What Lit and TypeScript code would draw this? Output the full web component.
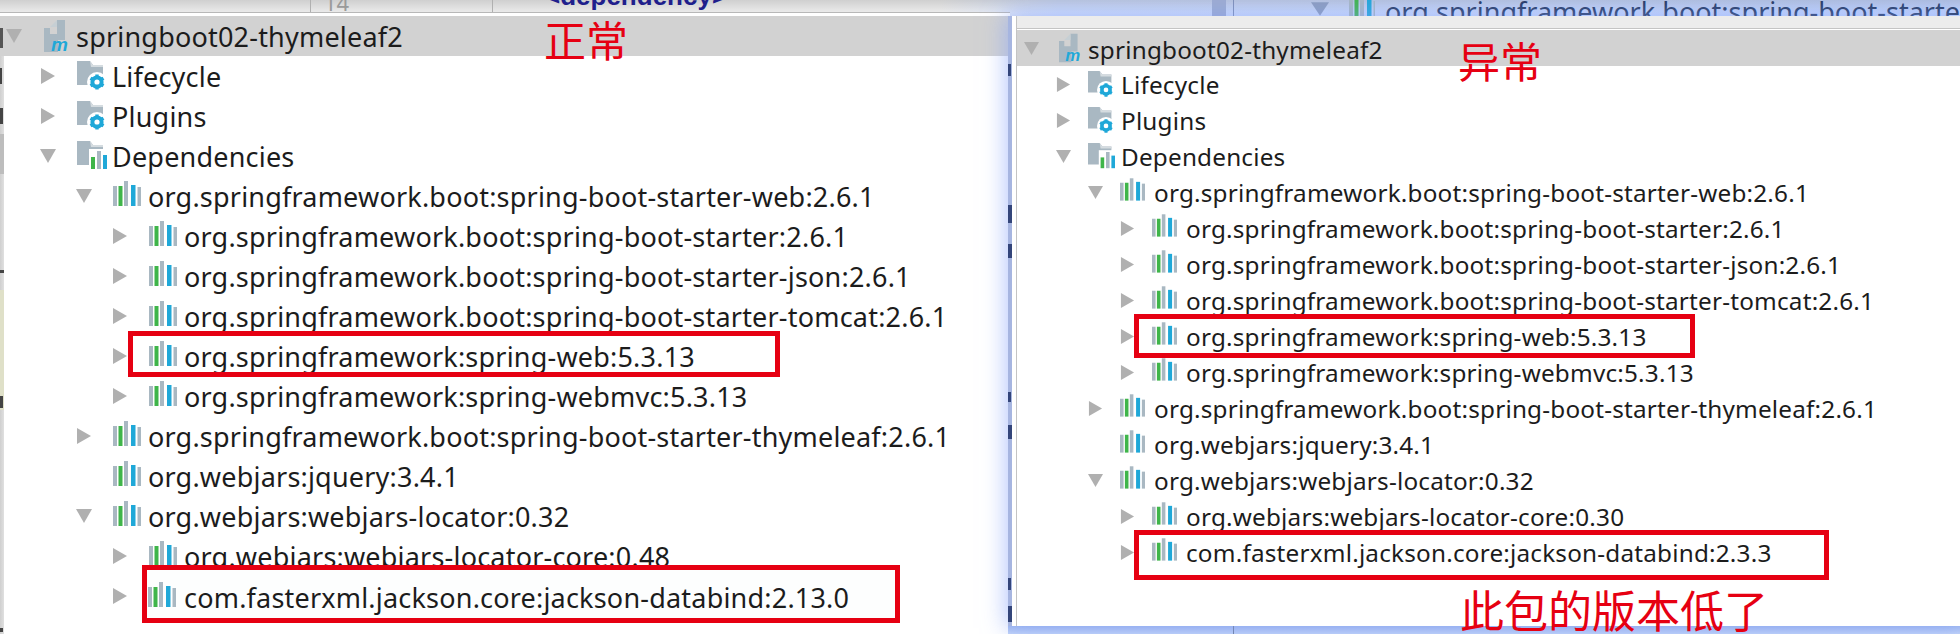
import { LitElement, html, css, svg } from "lit";
import { customElement } from "lit/decorators.js";

type Row = { t: string; l: number; a?: "r" | "d"; i: "dep" | "gear" | "bars"; };

const row = (t: string, l: number, i: Row["i"], a?: Row["a"]): Row => ({ t, l, i, a });

const rows = (core: string, jackson: string): Row[] => [
  row("Lifecycle", 0, "gear", "r"),
  row("Plugins", 0, "gear", "r"),
  row("Dependencies", 0, "bars", "d"),
  row("org.springframework.boot:spring-boot-starter-web:2.6.1", 1, "dep", "d"),
  row("org.springframework.boot:spring-boot-starter:2.6.1", 2, "dep", "r"),
  row("org.springframework.boot:spring-boot-starter-json:2.6.1", 2, "dep", "r"),
  row("org.springframework.boot:spring-boot-starter-tomcat:2.6.1", 2, "dep", "r"),
  row("org.springframework:spring-web:5.3.13", 2, "dep", "r"),
  row("org.springframework:spring-webmvc:5.3.13", 2, "dep", "r"),
  row("org.springframework.boot:spring-boot-starter-thymeleaf:2.6.1", 1, "dep", "r"),
  row("org.webjars:jquery:3.4.1", 1, "dep"),
  row("org.webjars:webjars-locator:0.32", 1, "dep", "d"),
  row(core, 2, "dep", "r"),
  row(jackson, 2, "dep", "r"),
];

const arrow = (a?: "r" | "d") =>
  a === "r"
    ? html`<svg class="arrow" viewBox="0 0 16 16"><path d="M1 0 L15 8 L1 16Z" fill="#b0b0b0"/></svg>`
    : a === "d"
    ? html`<svg class="arrow" viewBox="0 0 16 16"><path d="M0 1 L16 1 L8 15Z" fill="#b0b0b0"/></svg>`
    : html`<span class="arrow"></span>`;

const depIcon = html`<svg class="dep" viewBox="0 0 28 26">
  <rect x="0" y="6" width="4" height="20" fill="#a9b8c2"/>
  <rect x="5.5" y="6" width="4" height="20" fill="#3fb54a"/>
  <rect x="11" y="1" width="4" height="25" fill="#a9b8c2"/>
  <rect x="18" y="5" width="4.5" height="21" fill="#1fa8d8"/>
  <rect x="24.5" y="7" width="3.5" height="19" fill="#a9b8c2"/>
</svg>`;

const folder = svg`<path d="M0 0 H13 L16 4 H26 V24 H0Z" fill="#a9b8c2"/><path d="M13 0 L16 4 H26 V6 H14Z" fill="#d5dce0"/>`;

const gearIcon = html`<svg class="fold" viewBox="0 0 30 30">
  ${folder}
  <circle cx="20" cy="21" r="10" fill="#fff"/>
  <circle cx="20" cy="21" r="4.6" fill="none" stroke="#1fa8d8" stroke-width="4"/>
  <path d="M20 13.5 V16 M20 26 V28.5 M13.5 17.2 L16 18.7 M24 23.3 L26.5 24.8 M13.5 24.8 L16 23.3 M24 18.7 L26.5 17.2" stroke="#1fa8d8" stroke-width="3.4"/>
</svg>`;

const barsIcon = html`<svg class="fold" viewBox="0 0 30 30">
  ${folder}
  <rect x="12" y="8" width="18" height="20" fill="#fff"/>
  <rect x="14" y="16" width="4" height="12" fill="#3fb54a"/>
  <rect x="20" y="10" width="4" height="18" fill="#a9b8c2"/>
  <rect x="26" y="14" width="4" height="14" fill="#1fa8d8"/>
</svg>`;

const mIcon = html`<svg class="mod" viewBox="0 0 26 32">
  <path d="M0 8 H6 V14 H13 V0 H21 V20 H14 V32 H0Z" fill="#a9b8c2"/>
  <path d="M6 7 L13 0 V7Z" fill="#c6cfd4"/>
  <text x="7" y="31" class="m">m</text>
</svg>`;

const icon = (i: Row["i"]) => (i === "dep" ? depIcon : i === "gear" ? gearIcon : barsIcon);

const tree = (title: string, data: Row[]) => html`
  <div class="head">${arrow("d")}${mIcon}<span class="txt">${title}</span></div>
  ${data.map(
    (r) => html`<div class="row lv${r.l}">${arrow(r.a)}${icon(r.i)}<span class="txt">${r.t}</span></div>`
  )}
`;

// Slivers of the editor text that peek out beside each window: [top, height, width]
const leftBits = [[68, 16, 2], [108, 16, 3], [270, 3, 4], [396, 12, 3], [628, 4, 3]];
const rightBits = [[64, 12, 3], [205, 18, 4], [244, 14, 4], [392, 10, 3], [425, 14, 4], [578, 12, 3], [606, 16, 4]];

@customElement("app-root")
export class AppRoot extends LitElement {
  static styles = css`
    :host {
      display: block;
      width: 1960px;
      height: 634px;
      overflow: hidden;
      position: relative;
      background: #fff;
      font-family: "Noto Sans", "Noto Sans CJK SC", sans-serif;
      color: #1c1c1c;
    }
    .behind {
      position: absolute;
      left: 0;
      top: 0;
      right: 0;
      height: 16px;
      overflow: hidden;
      background: linear-gradient(180deg, rgba(0, 0, 0, 0.12), rgba(0, 0, 0, 0) 80%),
        linear-gradient(90deg, #ececec 0, #ececec 48%, #d4e0fa 54%, #c6d7fc 100%);
    }
    .gutter {
      position: absolute;
      top: 0;
      height: 12px;
      border-left: 1px solid #b0b0b0;
    }
    .frag {
      position: absolute;
      white-space: nowrap;
      line-height: 1;
    }
    .ln { left: 324px; top: -9px; font-size: 22px; color: #9a9a9a; }
    .tagtxt { left: 545px; top: -17px; font-size: 26px; font-weight: 700; color: #1f1f8c; font-family: "Liberation Sans", sans-serif; }
    .peek { left: 1385px; top: 0; font-size: 27px; color: #24375f; line-height: 24px; }
    .peekicon { position: absolute; left: 1349px; top: 0; width: 26px; height: 16px; overflow: hidden; }
    .peekarrow { position: absolute; left: 1311px; top: 2px; width: 18px; height: 14px; }
    .rule { position: absolute; left: 1233px; top: 0; height: 16px; width: 1px; background: #7f8fb5; }
    .thumb { position: absolute; left: 1212px; top: 0; height: 16px; width: 14px; background: #9eaccf; }

    .strip {
      position: absolute;
      left: 0;
      top: 56px;
      bottom: 0;
      width: 4px;
      background: linear-gradient(90deg, #cfcfcf, #e0e0e0);
      overflow: hidden;
    }
    .shade { position: absolute; left: 0; top: 78px; width: 4px; height: 40px; background: #bdbdbd; }
    .olive { position: absolute; left: 0; top: 234px; width: 4px; height: 120px; background: #dfe0c8; }
    .bit { position: absolute; left: 0; background: #444; }
    .headbit { position: absolute; left: 0; top: 28px; width: 3px; height: 20px; background: #555; }

    .win {
      position: absolute;
      background: #fff;
    }
    .left {
      left: 0;
      top: 13px;
      width: 1010px;
      height: 621px;
      border-top: 3px solid #fff;
      box-shadow: 0 -1px 0 #b8b8b8;
      box-sizing: border-box;
      --rh: 40px;
      --fs: 27px;
      --ind: 36px;
      --hh: 40px;
      --ax: 6px;
      --base: 40px;
      --ab: 16px;
      --gap0: 21px;
    }
    .right {
      left: 1008px;
      top: 16px;
      width: 952px;
      height: 610px;
      padding-left: 4px;
      box-sizing: border-box;
      box-shadow: 0 0 22px 2px rgba(130, 160, 250, 0.6);
      --rh: 36px;
      --fs: 24.3px;
      --ind: 32px;
      --hh: 36px;
      --ax: 7px;
      --base: 39px;
      --ab: 15px;
      --gap0: 17px;
    }
    .bluebar {
      position: absolute;
      left: 0;
      top: 0;
      bottom: 0;
      width: 4px;
      background: #a6b5e0;
      overflow: hidden;
    }
    .bluebar .bit { background: #33457a; }
    .inner {
      margin-left: 4px;
      height: 100%;
      border-left: 1px solid #c4c4c4;
      box-sizing: border-box;
    }
    .band {
      position: absolute;
      left: 1008px;
      right: 0;
      top: 626px;
      bottom: 0;
      background: linear-gradient(180deg, #a4bbee, #c4d5f8);
    }
    .band i { position: absolute; left: 225px; top: 0; bottom: 0; width: 1px; background: #6f7f9f; }
    .toolbar {
      height: 12px;
      background: #ececec;
      border-bottom: 1px solid #c4c4c4;
      margin-bottom: 1px;
    }
    .head {
      height: var(--hh);
      background: #d2d2d2;
      display: flex;
      align-items: center;
      padding-left: var(--ax);
    }
    .row {
      height: var(--rh);
      display: flex;
      align-items: center;
      white-space: nowrap;
    }
    .lv0 { padding-left: var(--base); }
    .lv1 { padding-left: calc(var(--base) + var(--ind)); }
    .lv2 { padding-left: calc(var(--base) + 2 * var(--ind)); }
    .txt {
      font-size: var(--fs);
      line-height: 1;
      white-space: nowrap;
      letter-spacing: 0.2px;
    }
    .right .row .txt { margin-top: 2px; }
    .right .head .txt { margin-top: 4px; }
    .arrow {
      width: var(--ab);
      height: var(--ab);
      flex: none;
      margin-right: var(--gap0);
      display: block;
    }
    .dep { width: 28px; height: 26px; flex: none; margin-right: 7px; margin-top: -6px; }
    .fold { width: 30px; height: 30px; flex: none; margin-right: 5px; }
    .mod { width: 26px; height: 32px; flex: none; margin-right: 6px; margin-left: 1px; }
    .right .dep { width: 25px; height: 24px; margin-right: 9px; }
    .right .fold { width: 27px; height: 27px; margin-right: 6px; }
    .right .mod { width: 23px; height: 30px; margin-right: 6px; margin-left: 3px; }
    .m { font: italic 700 19px "Liberation Sans", sans-serif; fill: #1fa8d8; }

    .box {
      position: absolute;
      border: 5px solid #e60012;
      box-sizing: border-box;
    }
    .box.fill { background: #fdfefe; }
    .b1 { left: 128px; top: 331px; width: 652px; height: 46px; }
    .b2 { left: 142px; top: 565px; width: 758px; height: 58px; }
    .b3 { left: 1134px; top: 314px; width: 561px; height: 44px; }
    .b4 { left: 1134px; top: 530px; width: 695px; height: 50px; }
    .over { position: absolute; white-space: nowrap; display: flex; align-items: center; height: 40px; left: 148px; top: 577px; --fs: 27px; }
    .over .dep { margin-right: 8px; }

    .note {
      position: absolute;
      color: #e60012;
      line-height: 1;
      font-family: "Noto Sans CJK SC", sans-serif;
      white-space: nowrap;
    }
    .n1 { left: 544px; top: 18px; font-size: 42px; }
    .n2 { left: 1458px; top: 39px; font-size: 42px; }
    .n3 { left: 1460px; top: 587px; font-size: 44px; }
  `;

  render() {
    const left = rows("org.webjars:webjars-locator-core:0.48", "com.fasterxml.jackson.core:jackson-databind:2.13.0");
    const right = rows("org.webjars:webjars-locator-core:0.30", "com.fasterxml.jackson.core:jackson-databind:2.3.3");
    return html`
      <div class="behind">
        <span class="gutter" style="left:310px"></span>
        <span class="gutter" style="left:492px"></span>
        <span class="frag ln">14</span>
        <span class="frag tagtxt">&lt;dependency&gt;</span>
        <span class="thumb"></span>
        <span class="rule"></span>
        <svg class="peekarrow" viewBox="0 0 16 12"><path d="M0 0 H16 L8 12Z" fill="#8d9dbd"/></svg>
        <span class="peekicon">${depIcon}</span>
        <span class="frag peek">org.springframework.boot:spring-boot-starter-web:2.6.1</span>
      </div>
      <div class="win left">${tree("springboot02-thymeleaf2", left)}</div>
      <div class="headbit"></div>
      <div class="strip">
        <div class="shade"></div>
        <div class="olive"></div>
        ${leftBits.map(
          (b) => html`<i class="bit" style="top:${b[0] - 56}px;height:${b[1]}px;width:${b[2]}px"></i>`
        )}
      </div>
      <div class="band"><i></i></div>
      <div class="win right">
        <div class="bluebar">
          ${rightBits.map(
            (b) => html`<i class="bit" style="top:${b[0] - 16}px;height:${b[1]}px;width:${b[2]}px"></i>`
          )}
        </div>
        <div class="inner">
          <div class="toolbar"></div>
          ${tree("springboot02-thymeleaf2", right)}
        </div>
      </div>
      <div class="box b1"></div>
      <div class="box b2 fill"></div>
      <div class="over">${depIcon}<span class="txt">com.fasterxml.jackson.core:jackson-databind:2.13.0</span></div>
      <div class="box b3"></div>
      <div class="box b4"></div>
      <div class="note n1">正常</div>
      <div class="note n2">异常</div>
      <div class="note n3">此包的版本低了</div>
    `;
  }
}
